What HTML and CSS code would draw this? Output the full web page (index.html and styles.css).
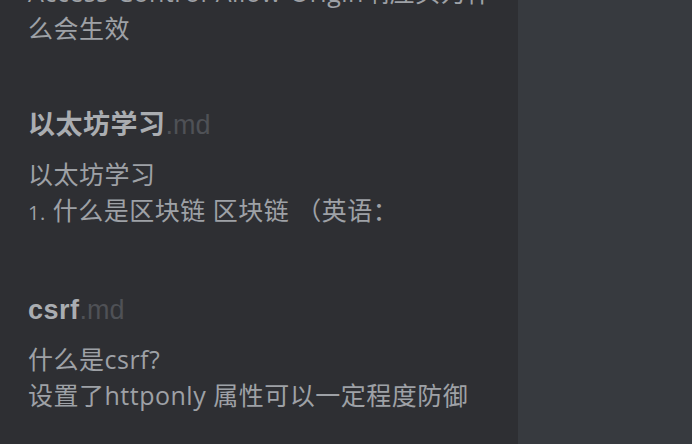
FILE: index.html
```html
<!DOCTYPE html>
<html lang="zh-CN">
<head>
<meta charset="utf-8">
<title>Notes</title>
<link rel="stylesheet" href="styles.css">
</head>
<body>
<div class="app">
  <aside class="list-panel">
    <div class="note-list">
      <article class="note">
        <p class="note-body">Access-Control-Allow-Origin响应头为什么会生效</p>
      </article>
      <article class="note">
        <h2 class="note-title">以太坊学习<span class="ext">.md</span></h2>
        <p class="note-body">以太坊学习<br><span class="num">1.</span> 什么是区块链 区块链 （英语：</p>
      </article>
      <article class="note">
        <h2 class="note-title">csrf<span class="ext">.md</span></h2>
        <p class="note-body">什么是csrf?<br>设置了httponly 属性可以一定程度防御</p>
      </article>
    </div>
  </aside>
  <main class="editor-panel"></main>
</div>
</body>
</html>
```

FILE: styles.css
```css
html, body {
  margin: 0;
  padding: 0;
  height: 100%;
}
body {
  background: #373a3f;
  overflow: hidden;
}
.app {
  display: flex;
  height: 444px;
}
.list-panel {
  width: 518px;
  flex: none;
  background: #2e2f33;
  overflow: hidden;
  box-sizing: border-box;
  padding: 0 20px 0 28px;
}
.editor-panel {
  flex: 1;
  background: #373a3f;
}
.note-list {
  margin-top: -26px;
  display: flex;
  flex-direction: column;
  gap: 61px;
}
.note {
  display: flex;
  flex-direction: column;
  gap: 13px;
}
.note-title {
  margin: 0;
  font-family: "Liberation Sans", "Noto Sans CJK SC", sans-serif;
  font-size: 27px;
  font-weight: 700;
  line-height: 36px;
  letter-spacing: 0.5px;
  color: #aaadb1;
  white-space: nowrap;
}
.ext {
  font-weight: 400;
  letter-spacing: 0;
  color: #4f5156;
}
.note-body {
  margin: 0;
  font-family: "Open Sans", "Noto Sans CJK SC", sans-serif;
  font-size: 25px;
  font-weight: 400;
  line-height: 36px;
  letter-spacing: 0.5px;
  color: #9ea1a6;
}
.num {
  font-size: 20px;
}
```
